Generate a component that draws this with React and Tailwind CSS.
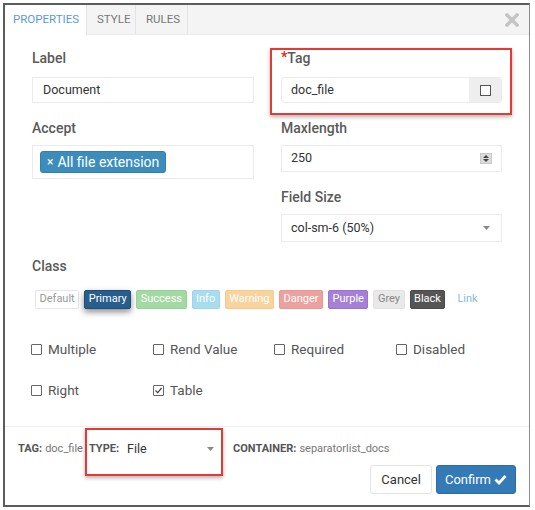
import React from "react";

const classButtons = [
  { name: "Default", cls: "bg-white text-[#999] border border-[#e6e6e6]" },
  { name: "Primary", cls: "bg-[#285e8e] text-white border border-[#204d74] shadow-[0_3px_6px_rgba(0,0,0,0.45)]" },
  { name: "Success", cls: "bg-[#a3d9a2] text-white border border-[#98d197]" },
  { name: "Info", cls: "bg-[#a8dcef] text-white border border-[#9dd5ea]" },
  { name: "Warning", cls: "bg-[#f8d39d] text-white border border-[#f3ca90]" },
  { name: "Danger", cls: "bg-[#eca19f] text-white border border-[#e59895]" },
  { name: "Purple", cls: "bg-[#a57fd8] text-white border border-[#9b74cf]" },
  { name: "Grey", cls: "bg-[#e9e9e9] text-[#888] border border-[#e2e2e2]" },
  { name: "Black", cls: "bg-[#555] text-white border border-[#4a4a4a]" },
];

function Check({ label, checked }) {
  return (
    <div className="flex items-center h-5 gap-[6px] text-[13.5px] text-[#555]">
      <span className="w-[11px] h-[11px] border border-[#666] rounded-[1px] bg-white flex items-center justify-center">
        {checked && (
          <svg width="9" height="9" viewBox="0 0 9 9">
            <path d="M1.5 4.5 L3.7 6.7 L7.6 2" stroke="#444" strokeWidth="1.2" fill="none" />
          </svg>
        )}
      </span>
      <span>{label}</span>
    </div>
  );
}

function FieldLabel({ children }) {
  return <div className="h-5 leading-5 text-[14px] font-medium text-[#5a5a5a]">{children}</div>;
}

export default function App() {
  return (
    <div className="w-[535px] h-[510px] bg-white overflow-hidden font-['Roboto','Liberation_Sans',sans-serif]">
      <div className="h-[3px] bg-white" />
      <div className="ml-[3px] w-[527px] h-[504px] border-2 border-r border-[#5c5c5c] border-r-[#8a8a8a] flex flex-col">
        {/* tabs */}
        <div className="h-[30px] bg-[#f4f4f4] flex items-stretch border-b border-[#ececec]">
          <div className="w-[82px] bg-white px-[8px] flex items-center text-[11.5px] text-[#5d9bd3] border-r border-[#e3e3e3] -mb-px">
            PROPERTIES
          </div>
          <div className="w-[49px] px-[10px] flex items-center text-[11.5px] text-[#777] border-r border-[#e3e3e3]">
            STYLE
          </div>
          <div className="w-[52px] px-[10px] flex items-center text-[11.5px] text-[#777] border-r border-[#e3e3e3]">
            RULES
          </div>
          <div className="flex-1" />
          <div className="flex items-center mr-[10px]">
            <svg width="14" height="14" viewBox="0 0 14 14">
              <path d="M2 2 L12 12 M12 2 L2 12" stroke="#c4c4c4" strokeWidth="3.4" strokeLinecap="square" />
            </svg>
          </div>
        </div>

        {/* body */}
        <div className="flex-1 pl-[27px] pt-[13px]">
          <div className="grid grid-cols-[222px_221px] gap-x-[27px]">
            <div className="flex flex-col">
              <FieldLabel>Label</FieldLabel>
              <div className="mt-[9px] h-[26px] border border-[#ebebeb] flex items-center px-[10px] text-[12.5px] text-[#333]">
                Document
              </div>
              <div className="mt-[15px]">
                <FieldLabel>Accept</FieldLabel>
              </div>
              <div className="mt-[7px] h-[34px] border border-[#ebebeb] px-[7px] pt-[3px]">
                <span className="inline-flex items-center h-[22px] px-[6px] rounded-[3px] bg-[#3c8dbc] border border-[#367fa9] text-white text-[14px]">
                  <span className="text-[12px] mr-[4px]">×</span>All file extension
                </span>
              </div>
            </div>

            <div className="flex flex-col">
              <div className="relative">
                <div className="absolute -left-[11px] -right-[10px] top-0 -bottom-[12px] border-2 border-[#e53935] shadow-[0_2px_4px_rgba(0,0,0,0.3)]" />
                <div className="h-5 leading-5 text-[14px] font-medium text-[#5a5a5a]">
                  <span className="text-[#e02a20] text-[14px] font-bold align-top relative -top-[1px]">*</span>Tag
                </div>
                <div className="mt-[9px] h-[26px] border border-[#ebebeb] rounded-[3px] flex">
                  <div className="flex-1 flex items-center px-[9px] text-[12.5px] text-[#333]">doc_file</div>
                  <div className="w-[32px] bg-[#eeeeee] rounded-r-[3px] flex items-center justify-center">
                    <span className="w-[11px] h-[11px] border border-[#555] bg-white" />
                  </div>
                </div>
              </div>
              <div className="mt-[15px]">
                <FieldLabel>Maxlength</FieldLabel>
              </div>
              <div className="mt-[7px] h-[27px] border border-[#ebebeb] flex items-center px-[9px] text-[12.5px] text-[#333]">
                <span className="flex-1">250</span>
                <span className="w-[12px] h-[11px] bg-[#dcdcdc] border border-[#c8c8c8] flex flex-col items-center justify-center gap-[1px]">
                  <svg width="6" height="3" viewBox="0 0 6 3"><path d="M0 3 L3 0 L6 3 Z" fill="#444" /></svg>
                  <svg width="6" height="3" viewBox="0 0 6 3"><path d="M0 0 L3 3 L6 0 Z" fill="#444" /></svg>
                </span>
              </div>
              <div className="mt-[15px]">
                <FieldLabel>Field Size</FieldLabel>
              </div>
              <div className="mt-[7px] h-[28px] border border-[#ebebeb] flex items-center px-[9px] text-[12.5px] text-[#333]">
                <span className="flex-1">col-sm-6 (50%)</span>
                <svg width="7" height="4" viewBox="0 0 7 4" className="mr-[2px]"><path d="M0 0 L7 0 L3.5 4 Z" fill="#888" /></svg>
              </div>
            </div>
          </div>

          <div className="mt-[14px]">
            <FieldLabel>Class</FieldLabel>
          </div>
          <div className="mt-[14px] flex items-center gap-[5px] pl-[3px]">
            {classButtons.map((b) => (
              <div key={b.name} className={`h-[19px] px-[3.5px] rounded-[2px] flex items-center text-[11px] ${b.cls}`}>
                {b.name}
              </div>
            ))}
            <div className="ml-[7px] text-[11px] text-[#8ab7e2]">Link</div>
          </div>

          <div className="mt-[30px] ml-[-1px] grid grid-cols-[122px_121px_122px_122px] gap-y-[21px]">
            <Check label="Multiple" />
            <Check label="Rend Value" />
            <Check label="Required" />
            <Check label="Disabled" />
            <Check label="Right" />
            <Check label="Table" checked />
          </div>
        </div>

        {/* footer */}
        <div className="h-[79px] border-t border-[#efefef] pl-[13px] pr-[13px] pt-[14px]">
          <div className="flex items-center h-4 text-[11px] text-[#777]">
            <span className="font-bold text-[#555]">TAG:</span>
            <span className="ml-[3px]">doc_file</span>
            <span className="relative ml-[6px] flex items-center">
              <span className="absolute -left-[4px] right-0 -top-[12px] -bottom-[18px] border-2 border-[#e53935] shadow-[0_2px_4px_rgba(0,0,0,0.3)]" />
              <span className="font-bold text-[#555]">TYPE:</span>
              <span className="ml-[8px] w-[80px] text-[12.5px] text-[#333]">File</span>
              <svg width="7" height="4" viewBox="0 0 7 4" className="mr-[9px]"><path d="M0 0 L7 0 L3.5 4 Z" fill="#888" /></svg>
            </span>
            <span className="ml-[10px] font-bold text-[#555]">CONTAINER:</span>
            <span className="ml-[3px]">separatorlist_docs</span>
          </div>
          <div className="mt-[8px] flex justify-end gap-[4px]">
            <div className="h-[29px] px-[10px] border border-[#e4e4e4] rounded-[3px] flex items-center text-[13px] text-[#333]">
              Cancel
            </div>
            <div className="h-[29px] px-[8px] bg-[#337ab7] border border-[#2e6da4] rounded-[3px] flex items-center gap-[3px] text-[13px] text-white">
              Confirm
              <svg width="13" height="11" viewBox="0 0 13 11">
                <path d="M1.5 5.5 L5 9 L11.5 2" stroke="white" strokeWidth="2.8" fill="none" />
              </svg>
            </div>
          </div>
        </div>
      </div>
    </div>
  );
}
